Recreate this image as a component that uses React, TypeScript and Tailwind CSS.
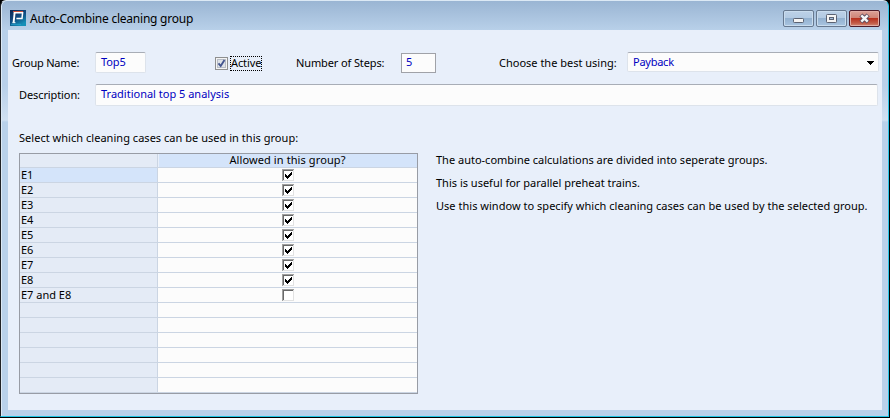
import React from "react";

const rows = ["E1", "E2", "E3", "E4", "E5", "E6", "E7", "E8", "E7 and E8", "", "", "", "", "", ""];

function Logo() {
  return (
    <svg width="16" height="16" viewBox="0 0 16 16" className="block shrink-0">
      <defs>
        <linearGradient id="logo" x1="0" y1="0" x2="0.6" y2="1">
          <stop offset="0" stopColor="#0b2350" />
          <stop offset="0.55" stopColor="#104a80" />
          <stop offset="1" stopColor="#1590b8" />
        </linearGradient>
      </defs>
      <rect width="16" height="16" fill="url(#logo)" />
      <path d="M3 1.5H13" stroke="#c8503c" strokeWidth="1" />
      <path d="M3.6 2.7H12.6L12 8.6H6.4" fill="none" stroke="#fff" strokeWidth="1.5" />
      <path d="M4.6 3L3.6 12.4" fill="none" stroke="#fff" strokeWidth="1.9" />
      <path d="M2.4 12.6H5.4" stroke="#e8f4fa" strokeWidth="1.2" />
      <path d="M1 14.3H11" stroke="#2aa6cf" strokeWidth="0.8" />
    </svg>
  );
}

function WindowButton({ kind }: { kind: "min" | "max" | "close" }) {
  const close = kind === "close";
  return (
    <div
      className={
        close
          ? "h-[17px] w-[31px] rounded-[2px] border border-[#4d1c29] bg-[linear-gradient(#dba298_0%,#cf8476_46%,#b8321f_50%,#c25a46_80%,#d38a74_100%)] shadow-[inset_0_0_0_1px_#e1aca4]"
          : "h-[17px] w-[31px] rounded-[2px] border border-[#66788f] bg-[linear-gradient(#bdd1e7_0%,#b2cae3_46%,#93b1d0_50%,#a9c5e1_100%)] shadow-[inset_0_0_0_1px_#c9dcee]"
      }
    >
      <svg width="29" height="15" viewBox="0 0 29 15" className="block">
        {kind === "min" && <rect x="9.5" y="7.5" width="10" height="4" rx="0.8" fill="#f4f4f4" stroke="#5b6272" />}
        {kind === "max" && (
          <>
            <rect x="9.5" y="3.5" width="10" height="8" rx="0.8" fill="#f4f4f4" stroke="#5b6272" />
            <rect x="12.5" y="6.5" width="4" height="2" fill="#a5bfdb" stroke="#5b6272" />
          </>
        )}
        {close && (
          <>
            <path d="M10.9 4L18.1 11M18.1 4L10.9 11" stroke="#5a4a5c" strokeWidth="4.4" />
            <path d="M11.3 4.4L17.7 10.6M17.7 4.4L11.3 10.6" stroke="#f6f6f6" strokeWidth="2.5" />
          </>
        )}
      </svg>
    </div>
  );
}

function CellCheck({ checked }: { checked: boolean }) {
  return (
    <svg width="12" height="12" viewBox="0 0 12 12" className="block" shapeRendering="crispEdges">
      <rect width="12" height="12" fill="#e2e2e2" />
      <path d="M0 0H12V1H1V12H0Z" fill="#a0a0a0" />
      <path d="M1 1H11V2H2V11H1Z" fill="#696969" />
      <rect x="2" y="2" width="9" height="9" fill="#fff" />
      {checked && (
        <path d="M3 5H4V6H5V7H6V6H7V5H8V4H9V3H10V6H9V7H8V8H7V9H6V10H5V9H4V8H3Z" fill="#000" />
      )}
    </svg>
  );
}

export default function App() {
  return (
    <div className="h-[418px] w-[890px] bg-black font-['Noto_Sans',sans-serif] text-[11px] leading-[15px] text-black">
      <div className="flex h-[417px] w-[889px] flex-col rounded-t-[6px] border-t border-r border-b border-l border-t-[#dce9f5] border-r-[#2bc6e8] border-b-[#1fc5e3] border-l-[#202226] bg-[linear-gradient(#9ab5d3_0px,#b8d0e9_29px,#b9d0e9_85px,#d0e0f1_119px,#b9d1ea_121px)] pr-[6px] pb-[6px] pl-[7px] shadow-[inset_1px_0_0_#dce9f5]">
        <div className="flex h-[29px] shrink-0 pt-[9px] pl-[2px]">
          <Logo />
          <span className="ml-[4px] pt-px text-[12px] leading-[16px] tracking-[-0.23px] whitespace-nowrap">Auto-Combine cleaning group</span>
          <div className="mr-[2px] ml-auto flex gap-[2px]">
            <WindowButton kind="min" />
            <WindowButton kind="max" />
            <WindowButton kind="close" />
          </div>
        </div>

        <div className="min-h-0 flex-1 bg-[#e8effa]">
          <div className="flex h-[54px] items-start whitespace-nowrap">
            <span className="mt-[25px] ml-[4px] w-[83px] tracking-[-0.2px]">Group Name:</span>
            <div className="mt-[22px] h-[21px] w-[51px] rounded-[2px] border border-[#dde3eb] border-t-[#a8adb6] bg-[#fcfcfc] pt-px pl-[5px] tracking-[-0.1px] text-[#0000c0]">Top5</div>
            <svg width="13" height="13" viewBox="0 0 13 13" className="mt-[27px] ml-[69px] block shrink-0">
              <rect x="0.5" y="0.5" width="12" height="12" fill="#f4f4f4" stroke="#8e8f8f" />
              <rect x="2.5" y="2.5" width="8" height="8" fill="#dfe3e8" stroke="#b8bdc6" />
              <path d="M3.5 6.3L5.7 9L9.5 3" fill="none" stroke="#43558f" strokeWidth="1.9" />
            </svg>
            <span className="mt-[26px] ml-[2px] h-[15px] w-[32px] border border-dotted border-black leading-[11px] tracking-[-0.1px]">Active</span>
            <span className="mt-[25px] ml-[34px] w-[105px] tracking-[-0.12px]">Number of Steps:</span>
            <div className="mt-[23px] h-[20px] w-[35px] border border-[#a0a2a8] bg-[#fcfcfc] pl-[4px] text-[#0000c0]">5</div>
            <span className="mt-[25px] ml-[63px] w-[128px]">Choose the best using:</span>
            <div className="mt-[22px] flex h-[20px] w-[252px] rounded-[2px] border border-[#dde3eb] border-t-[#a8adb6] bg-[#fcfcfc] pt-px pr-[4px] pl-[5px] text-[#0000c0]">
              <span className="tracking-[-0.25px]">Payback</span>
              <svg width="7" height="4" viewBox="0 0 7 4" className="mt-[7px] ml-auto block" shapeRendering="crispEdges">
                <path d="M0 0H7V1H6V2H5V3H4V4H3V3H2V2H1V1H0Z" fill="#000" />
              </svg>
            </div>
          </div>

          <div className="flex h-[46px] items-start whitespace-nowrap">
            <span className="mt-[3px] ml-[11px] w-[76px] tracking-[-0.1px]">Description:</span>
            <div className="h-[22px] w-[783px] rounded-[2px] border border-[#dde3eb] border-t-[#a8adb6] bg-[#fcfcfc] pt-px pl-[5px] text-[#0000c0]">Traditional top 5 analysis</div>
          </div>

          <div className="flex pl-[11px]">
            <div className="w-[399px]">
              <div className="h-[23px] tracking-[0.03px] whitespace-nowrap">Select which cleaning cases can be used in this group:</div>
              <div className="border border-[#989ca5]">
                <div className="flex h-[14px] border-b border-[#cbd5e3] leading-[11px]">
                  <div className="w-[138px] border-r border-[#cbd5e3] bg-[#e4ebf6]" />
                  <div className="ml-px flex-1 bg-[#d4e4fa] pr-px text-center tracking-[0.1px]">Allowed in this group?</div>
                </div>
                {rows.map((name, i) => (
                  <div key={i} className="flex h-[15px] border-b border-[#cbd5e3] leading-[14px]">
                    <div className={"w-[138px] border-r border-[#cbd5e3] pl-px whitespace-nowrap " + (i === 0 ? "bg-[#d4e4fa]" : "bg-[#e4ebf6]")}>{name}</div>
                    <div className="flex-1 bg-[#fcfcfc] pt-px pl-[124px]">{name && <CellCheck checked={i < 8} />}</div>
                  </div>
                ))}
              </div>
            </div>
            <div className="ml-[18px] flex flex-col gap-[8px] pt-[22px] whitespace-nowrap">
              <p>The auto-combine calculations are divided into seperate groups.</p>
              <p>This is useful for parallel preheat trains.</p>
              <p className="tracking-[0.025px]">Use this window to specify which cleaning cases can be used by the selected group.</p>
            </div>
          </div>
        </div>
      </div>
    </div>
  );
}
